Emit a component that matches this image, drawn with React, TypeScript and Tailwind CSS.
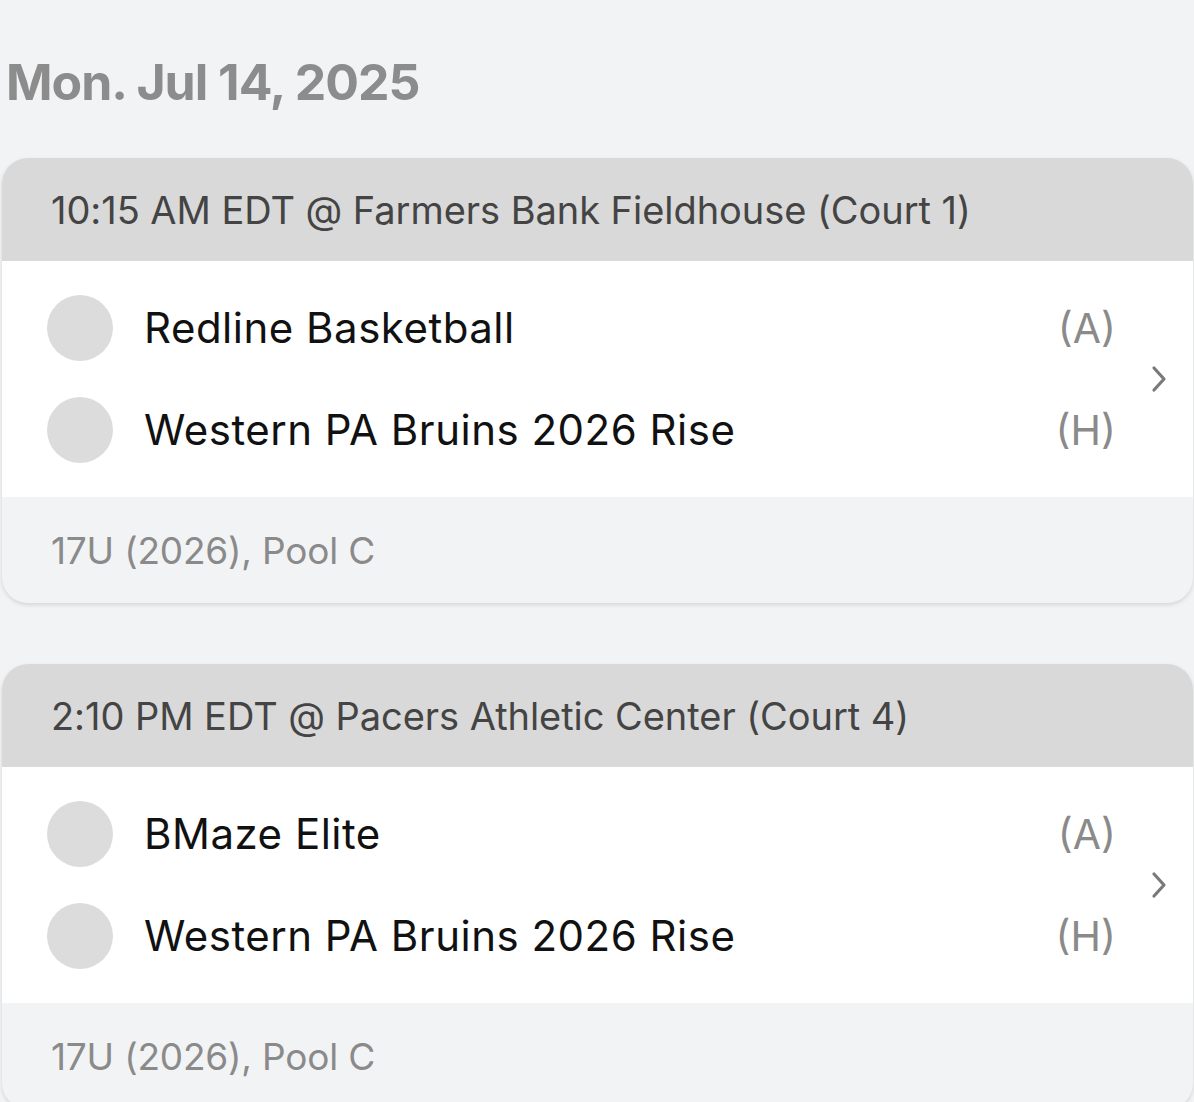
import React from "react";

const font = { fontFamily: "Inter, 'Noto Sans', sans-serif" };

function Chevron() {
  return (
    <svg width="18" height="28" viewBox="0 0 18 28" fill="none">
      <path d="M4 3 L14 14 L4 25" stroke="#7a7a7a" strokeWidth="3.2" strokeLinecap="round" strokeLinejoin="round" />
    </svg>
  );
}

function Team({ name, side }: { name: string; side: string }) {
  return (
    <div className="flex h-[102px] items-center">
      <div className="ml-[45px] h-[66px] w-[66px] shrink-0 rounded-full bg-[#dcdcdc]" />
      <div className="ml-[31px] flex-1 text-[42px] leading-none text-[#111] tracking-[0.5px]">{name}</div>
      <div className="text-[41px] leading-none text-[#8a8a8a]">{side}</div>
    </div>
  );
}

function Game({ header, teams }: { header: string; teams: [string, string][] }) {
  return (
    <div className="ml-[2px] mr-[1px] overflow-hidden rounded-[26px] bg-[#f2f3f5] shadow-[0_2px_4px_rgba(0,0,0,0.12)]">
      <div className="flex h-[103px] items-center bg-[#d9d9d9] px-[49px] text-[38px] leading-none text-[#444] tracking-[-0.05px]">
        {header}
      </div>
      <div className="flex items-center bg-white py-[16px] pr-[25px]">
        <div className="flex-1 pr-[34px]">
          {teams.map(([n, s]) => (
            <Team key={n + s} name={n} side={s} />
          ))}
        </div>
        <Chevron />
      </div>
      <div className="flex h-[106px] items-center px-[49px] text-[37px] leading-none text-[#8a8a8a] tracking-[-0.2px]">
        17U (2026), Pool C
      </div>
    </div>
  );
}

export default function App() {
  return (
    <div style={font} className="min-h-[1102px] w-[1194px] overflow-hidden bg-[#f2f3f5]">
      <div className="pl-[6px] pt-[52px] text-[50px] font-bold leading-[1.2] text-[#8c8c8c] tracking-[-1px]">
        Mon. Jul 14, 2025
      </div>
      <div className="mt-[46px] flex flex-col gap-[61px]">
        <Game
          header="10:15 AM EDT @ Farmers Bank Fieldhouse (Court 1)"
          teams={[
            ["Redline Basketball", "(A)"],
            ["Western PA Bruins 2026 Rise", "(H)"],
          ]}
        />
        <Game
          header="2:10 PM EDT @ Pacers Athletic Center (Court 4)"
          teams={[
            ["BMaze Elite", "(A)"],
            ["Western PA Bruins 2026 Rise", "(H)"],
          ]}
        />
      </div>
    </div>
  );
}
